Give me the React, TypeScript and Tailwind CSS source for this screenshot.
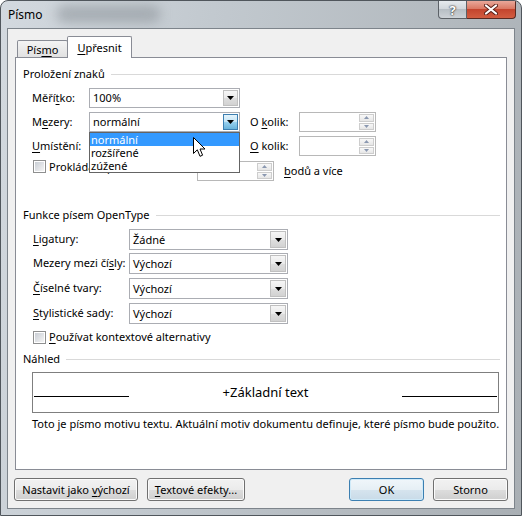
import React from "react";

const Tri = ({ color = "#000" }: { color?: string }) => (
  <svg width="7" height="4" viewBox="0 0 7 4">
    <path d="M0 0H7L3.5 4Z" fill={color} />
  </svg>
);

function Combo({
  value,
  cls,
  btn,
  hover = false,
  children,
}: {
  value: string;
  cls: string;
  btn: string;
  hover?: boolean;
  children?: React.ReactNode;
}) {
  return (
    <div className={`relative flex items-center border border-[#abadb3] bg-white ${cls}`}>
      <span className="flex-1 pl-[3px] leading-[16px]">{value}</span>
      <div
        className={`mr-[1px] flex items-center justify-center border ${btn} ${
          hover
            ? "border-[#3c7fb1] bg-[linear-gradient(#e5f4fc_0%,#c4e5f6_50%,#98d1ef_51%,#68b3db_100%)]"
            : "border-[#c0c0c0] bg-[linear-gradient(#f6f6f6_0%,#eaeaea_50%,#dedede_51%,#d2d2d2_100%)]"
        }`}
      >
        <Tri />
      </div>
      {children}
    </div>
  );
}

function Spin({ cls }: { cls: string }) {
  return (
    <div className={`flex items-stretch border border-[#b8b8b8] bg-white ${cls}`}>
      <div className="flex-1" />
      <div className="my-[1px] mr-[1px] flex w-[15px] flex-col gap-[1px]">
        <div className="flex flex-1 items-center justify-center border border-[#cdcdcd] bg-[linear-gradient(#f8f8f8,#e6e6e6)]">
          <svg width="5" height="3" viewBox="0 0 5 3">
            <path d="M0 3H5L2.5 0Z" fill="#8a98b0" />
          </svg>
        </div>
        <div className="flex flex-1 items-center justify-center border border-[#cdcdcd] bg-[linear-gradient(#f8f8f8,#e6e6e6)]">
          <svg width="5" height="3" viewBox="0 0 5 3">
            <path d="M0 0H5L2.5 3Z" fill="#8a98b0" />
          </svg>
        </div>
      </div>
    </div>
  );
}

const Check = () => (
  <div className="flex h-[13px] w-[13px] shrink-0 items-center justify-center border border-[#8e8f8f] bg-white">
    <div className="h-[9px] w-[9px] bg-[linear-gradient(135deg,#c9ced5,#f4f4f4)]" />
  </div>
);

function Header({ text, cls }: { text: string; cls: string }) {
  return (
    <div className={`ml-[7px] mr-[6px] flex h-[16px] items-center ${cls}`}>
      <span className="leading-[16px]">{text}</span>
      <div className="ml-[6px] h-px flex-1 bg-[#d9d9d9]" />
    </div>
  );
}

const U = ({ children }: { children: React.ReactNode }) => (
  <span className="underline underline-offset-[2px]">{children}</span>
);

function Btn({
  cls,
  children,
  def = false,
}: {
  cls: string;
  children: React.ReactNode;
  def?: boolean;
}) {
  return (
    <div
      className={`flex h-[23px] items-center justify-center rounded-[3px] border ${cls} ${
        def
          ? "border-[#3c7fb1] bg-[linear-gradient(#f0f6fa_0%,#e6eff5_50%,#d6e4ee_51%,#c9dbe8_100%)] shadow-[inset_0_0_0_1px_#cfeaf9]"
          : "border-[#707070] bg-[linear-gradient(#f2f2f2_0%,#ebebeb_50%,#dddddd_51%,#cfcfcf_100%)] shadow-[inset_0_0_0_1px_#fbfbfb]"
      }`}
    >
      <span className="leading-[16px]">{children}</span>
    </div>
  );
}

export default function App() {
  return (
    <div className="relative h-[516px] w-[522px] overflow-hidden rounded-t-[8px] border border-[#50565c] bg-[linear-gradient(100deg,#d3d9df_0%,#c2c9cf_35%,#a9afb4_100%)] font-['Noto_Sans',sans-serif] text-[11px] text-black">
      <div className="absolute left-[55px] top-[4px] h-[18px] w-[105px] rounded-full bg-[#8f969c] opacity-60 blur-[6px]" />
      {/* title bar */}
      <div className="relative flex h-[27px] items-start">
        <span className="pl-[7px] pt-[7px] text-[12px] leading-[14px]">Písmo</span>
        <div className="ml-auto mr-[5px] flex">
          <div className="flex h-[18px] w-[29px] items-center justify-center rounded-bl-[4px] border border-t-0 border-[#5c6167] bg-[linear-gradient(#e6eaee_0%,#d2d7dc_45%,#b7bec4_50%,#cdd2d7_100%)]">
            <span className="text-[13px] font-bold leading-[14px] text-white [text-shadow:0_0_2px_#222,0_0_1px_#222]">?</span>
          </div>
          <div className="flex h-[18px] w-[49px] items-center justify-center rounded-br-[4px] border border-l-0 border-t-0 border-[#5a2a22] bg-[linear-gradient(#e9a89a_0%,#da7964_45%,#c4452e_50%,#d25d41_100%)]">
            <svg width="14" height="11" viewBox="0 0 14 11">
              <path d="M2 1.5L12 9.5M12 1.5L2 9.5" stroke="#5a2018" strokeWidth="4" strokeLinecap="round" />
              <path d="M2 1.5L12 9.5M12 1.5L2 9.5" stroke="#fff" strokeWidth="2.2" strokeLinecap="round" />
            </svg>
          </div>
        </div>
      </div>
      {/* client */}
      <div className="relative mx-[6px] flex h-[481px] flex-col border border-[#7d848b] bg-[#f0f0f0] pt-[7px]">
        {/* tabs */}
        <div className="flex h-[21px] items-end pl-[9px]">
          <div className="flex h-[17px] w-[51px] items-start justify-center rounded-t-[2px] border border-b-0 border-[#898c95] bg-[linear-gradient(#f4f4f4,#e1e1e1)] pt-[1px]">
            <span className="leading-[15px]">
              Pís<U>m</U>o
            </span>
          </div>
          <div className="relative z-10 -mb-px -ml-px flex h-[22px] w-[65px] items-start justify-center rounded-t-[2px] border border-b-0 border-[#898c95] bg-white pt-[3px]">
            <span className="leading-[15px]">
              <U>U</U>přesnit
            </span>
          </div>
        </div>
        {/* panel */}
        <div className="mx-[7px] flex h-[413px] flex-col border border-[#898c95] bg-white">
          <Header text="Proložení znaků" cls="mt-[8px]" />
          {/* row 1 */}
          <div className="ml-[16px] mt-[6px] flex h-[20px] items-center">
            <span className="w-[57px]">
              Měří<U>t</U>ko:
            </span>
            <Combo value="100%" cls="h-[20px] w-[151px]" btn="h-[16px] w-[15px]" />
          </div>
          {/* row 2 */}
          <div className="relative z-20 ml-[16px] mt-[4px] flex h-[20px] items-center">
            <span className="w-[57px]">
              M<U>e</U>zery:
            </span>
            <Combo value="normální" cls="h-[20px] w-[151px]" btn="h-[16px] w-[15px]" hover>
              <div className="absolute left-[-1px] top-[19px] w-[151px] border border-[#646464] bg-white">
                <div className="h-[13px] bg-[#3399ff] pl-[1px] leading-[13px] text-white">normální</div>
                <div className="h-[13px] pl-[1px] leading-[13px]">rozšířené</div>
                <div className="h-[13px] pl-[1px] leading-[13px]">zúžené</div>
              </div>
              <svg
                className="absolute left-[103px] top-[24px]"
                width="13"
                height="21"
                viewBox="0 0 13 21"
              >
                <path
                  d="M0.5 0.5V16.5L4.3 12.8L7 19.3L9.6 18.2L7 12H12Z"
                  fill="#fff"
                  stroke="#000"
                  strokeWidth="1"
                  strokeLinejoin="miter"
                />
              </svg>
            </Combo>
            <span className="w-[59px] pl-[10px]">
              O <U>k</U>olik:
            </span>
            <Spin cls="h-[20px] w-[77px]" />
          </div>
          {/* row 3 */}
          <div className="ml-[16px] mt-[4px] flex h-[20px] items-center">
            <span className="w-[57px]">
              <U>U</U>místění:
            </span>
            <Combo value="" cls="h-[20px] w-[151px]" btn="h-[16px] w-[15px]" />
            <span className="w-[59px] pl-[10px]">
              <U>O</U> kolik:
            </span>
            <Spin cls="h-[20px] w-[77px]" />
          </div>
          {/* row 4 */}
          <div className="ml-[16px] mt-[4px] flex h-[21px]">
            <div className="flex h-[13px] w-[165px] items-center pl-[1px]">
              <Check />
              <span className="ml-[3px] leading-[13px]">Prokládání písem velikosti:</span>
            </div>
            <Spin cls="mt-[1px] h-[20px] w-[77px]" />
            <span className="ml-[10px] self-center pt-[1px]">
              <U>b</U>odů a více
            </span>
          </div>

          <Header text="Funkce písem OpenType" cls="mt-[26px]" />
          <div className="ml-[17px] mt-[6px] flex h-[21px] items-center">
            <span className="w-[96px]">
              <U>L</U>igatury:
            </span>
            <Combo value="Žádné" cls="h-[21px] w-[159px]" btn="h-[17px] w-[16px]" />
          </div>
          <div className="ml-[17px] mt-[3px] flex h-[21px] items-center">
            <span className="w-[96px]">
              Mezery mezi čí<U>s</U>ly:
            </span>
            <Combo value="Výchozí" cls="h-[21px] w-[159px]" btn="h-[17px] w-[16px]" />
          </div>
          <div className="ml-[17px] mt-[4px] flex h-[21px] items-center">
            <span className="w-[96px]">
              <U>Č</U>íselné tvary:
            </span>
            <Combo value="Výchozí" cls="h-[21px] w-[159px]" btn="h-[17px] w-[16px]" />
          </div>
          <div className="ml-[17px] mt-[4px] flex h-[21px] items-center">
            <span className="w-[96px]">
              <U>S</U>tylistické sady:
            </span>
            <Combo value="Výchozí" cls="h-[21px] w-[159px]" btn="h-[17px] w-[16px]" />
          </div>
          <div className="ml-[17px] mt-[5px] flex h-[16px] items-center">
            <Check />
            <span className="ml-[3px]">
              <U>P</U>oužívat kontextové alternativy
            </span>
          </div>

          <Header text="Náhled" cls="mt-[6px]" />
          <div className="ml-[16px] mr-[7px] mt-[5px] flex h-[41px] border border-[#7f7f7f] px-[1px]">
            <div className="mt-[23px] h-px w-[95px] bg-black" />
            <div className="mt-[10px] flex-1 text-center text-[13px] leading-[18px]">+Základní text</div>
            <div className="mt-[23px] h-px w-[95px] bg-black" />
          </div>
          <div className="ml-[16px] mt-[3px] leading-[16px]">
            Toto je písmo motivu textu. Aktuální motiv dokumentu definuje, které písmo bude použito.
          </div>
        </div>
        {/* buttons */}
        <div className="mt-[8px] flex px-[6px]">
          <Btn cls="w-[124px]">
            Nastavit jako <U>v</U>ýchozí
          </Btn>
          <Btn cls="ml-[9px] w-[98px]">
            <U>T</U>extové efekty...
          </Btn>
          <Btn cls="ml-auto w-[75px]" def>
            OK
          </Btn>
          <Btn cls="ml-[9px] w-[75px]">Storno</Btn>
        </div>
      </div>
    </div>
  );
}
